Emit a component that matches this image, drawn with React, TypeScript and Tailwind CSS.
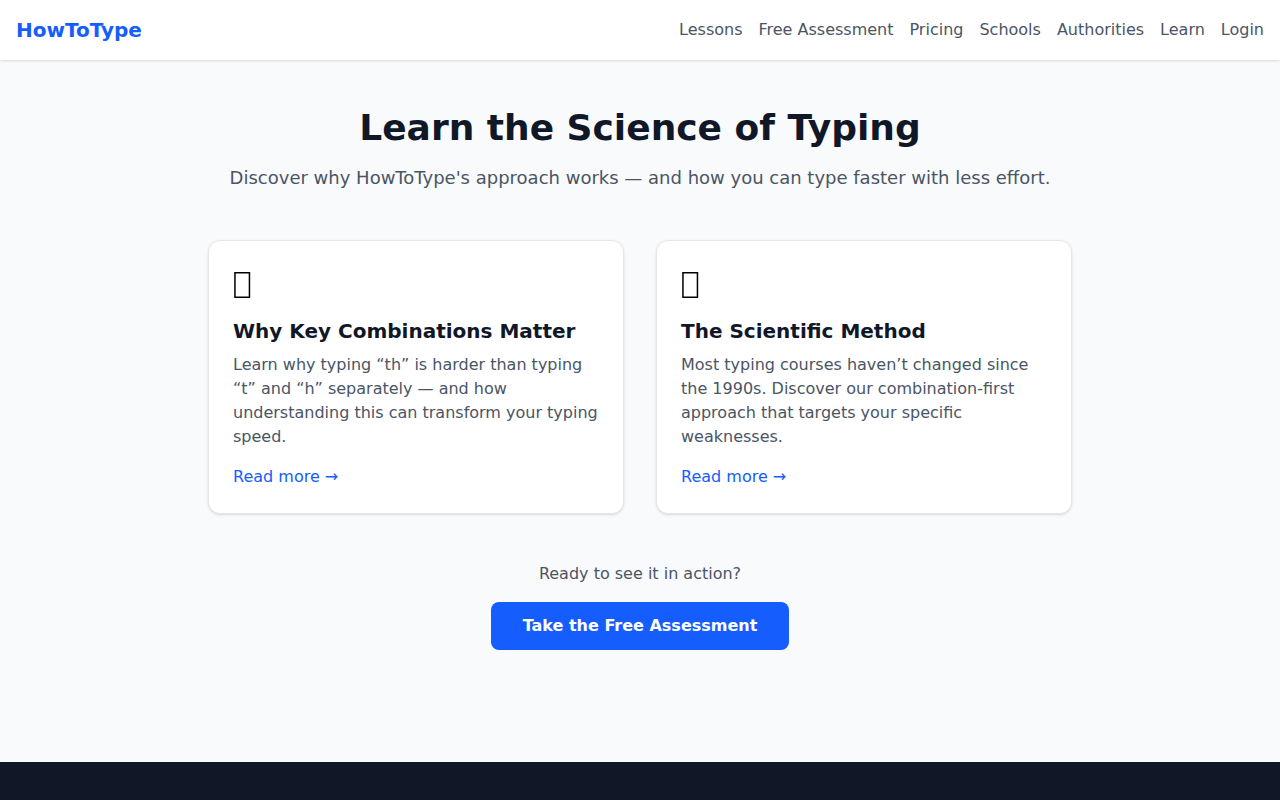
const navLinks = [
  { href: '/lessons', label: 'Lessons' },
  { href: '/assessment', label: 'Free Assessment' },
  { href: '/pricing', label: 'Pricing' },
  { href: '/schools', label: 'Schools' },
  { href: '/authorities', label: 'Authorities' },
  { href: '/learn', label: 'Learn' },
  { href: '/login', label: 'Login' },
];

const articles = [
  {
    href: '/learn/key-combinations',
    title: 'Why Key Combinations Matter',
    text: 'Learn why typing “th” is harder than typing “t” and “h” separately — and how understanding this can transform your typing speed.',
  },
  {
    href: '/learn/scientific-method',
    title: 'The Scientific Method',
    text: 'Most typing courses haven’t changed since the 1990s. Discover our combination-first approach that targets your specific weaknesses.',
  },
];

function Header() {
  return (
    <header className="relative bg-white shadow-sm">
      <div className="flex items-center justify-between p-4">
        <a href="/" className="text-xl font-bold text-blue-600">
          HowToType
        </a>
        <nav className="flex gap-4">
          {navLinks.map(({ href, label }) => (
            <a key={href} href={href} className="text-gray-600 hover:text-blue-600">
              {label}
            </a>
          ))}
        </nav>
      </div>
    </header>
  );
}

function BoxIcon() {
  return (
    <svg width="18" height="36" viewBox="0 0 18 36" fill="none" aria-hidden="true" className="block mb-4">
      <path d="M1.2 7h16v26h-16zM2.7 8.5v23h13v-23z" fill="black" fillRule="evenodd" />
    </svg>
  );
}

export default function App() {
  return (
    <div className="min-h-screen flex flex-col bg-gray-50 text-black font-['DejaVu_Sans',sans-serif]">
      <Header />

      <main className="w-full max-w-4xl mx-auto px-4 py-12">
        <div className="text-center mb-12">
          <h1 className="text-4xl font-bold text-gray-900 mb-4">Learn the Science of Typing</h1>
          <p className="text-lg text-gray-600">
            Discover why HowToType's approach works — and how you can type faster with less effort.
          </p>
        </div>

        <div className="grid md:grid-cols-2 gap-8">
          {articles.map(({ href, title, text }) => (
            <a
              key={href}
              href={href}
              className="block p-6 bg-white rounded-xl border border-gray-200 shadow-sm hover:shadow-md transition-shadow"
            >
              <BoxIcon />
              <h2 className="text-xl font-bold text-gray-900 mb-2">{title}</h2>
              <p className="text-gray-600">{text}</p>
              <span className="block mt-4 text-blue-600">Read more →</span>
            </a>
          ))}
        </div>

        <div className="text-center mt-12">
          <p className="text-gray-600 mb-4">Ready to see it in action?</p>
          <a
            href="/assessment"
            className="inline-block align-top px-8 py-3 bg-blue-600 text-white font-semibold rounded-lg hover:bg-blue-700 transition-colors"
          >
            Take the Free Assessment
          </a>
        </div>
      </main>

      <footer className="flex-1 mt-16 bg-gray-900" />
    </div>
  );
}
